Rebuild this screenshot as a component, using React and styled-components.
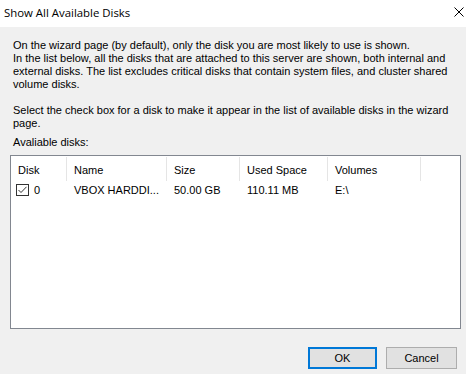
import React from "react";
import styled, { createGlobalStyle } from "styled-components";

const GlobalStyle = createGlobalStyle`
  html, body {
    margin: 0;
    padding: 0;
    background: #f0f0f0;
  }
`;

const Window = styled.div`
  width: 466px;
  height: 374px;
  display: flex;
  flex-direction: column;
  background: #f0f0f0;
  font-family: "Liberation Sans", Arial, sans-serif;
  font-size: 11px;
  color: #000;
  overflow: hidden;
`;

const TitleBar = styled.div`
  height: 27px;
  flex: none;
  background: #fff;
  display: flex;
  align-items: center;
  justify-content: space-between;
  padding-left: 4px;
  box-sizing: border-box;
`;

const Title = styled.span`
  font-family: "Open Sans", "Noto Sans", sans-serif;
  font-size: 11.4px;
  margin-top: -3px;
`;

const Close = styled.div`
  width: 14px;
  height: 27px;
  display: flex;
  align-items: center;
  justify-content: center;
  margin-top: -3px;
`;

const Body = styled.div`
  flex: 1;
  display: flex;
  flex-direction: column;
  padding: 12px 5px 5px 10px;
`;

const Para = styled.p`
  margin: 0 0 ${(p) => p.$gap || 0}px 3px;
  line-height: 13px;
`;

const ListBox = styled.div`
  width: 451px;
  height: 174px;
  box-sizing: border-box;
  border: 1px solid #828790;
  background: #fff;
  margin-top: 6px;
`;

const Row = styled.div`
  display: grid;
  grid-template-columns: 56px 100px 73px 88px 93px 1fr;
  height: ${(p) => (p.$header ? 24 : 17)}px;
  margin-top: ${(p) => (p.$header ? 1 : 0)}px;
  align-items: center;
`;

const Cell = styled.div`
  height: 100%;
  display: flex;
  align-items: center;
  gap: 5px;
  padding-left: 7px;
  box-sizing: border-box;
  white-space: nowrap;
  border-right: ${(p) => (p.$header && !p.$last ? "1px solid #e5e5e5" : "none")};
  padding-top: ${(p) => (p.$header ? 1 : 0)}px;
`;

const Check = styled.span`
  width: 13px;
  height: 12px;
  box-sizing: border-box;
  border: 1px solid #333;
  display: inline-flex;
  align-items: center;
  justify-content: center;
  margin-left: -2px;
`;

const Footer = styled.div`
  display: flex;
  justify-content: flex-end;
  gap: 9px;
  margin-top: 18px;
  padding-right: 4px;
`;

const Button = styled.button`
  width: ${(p) => (p.$primary ? 69 : 71)}px;
  height: 22px;
  box-sizing: border-box;
  background: #e1e1e1;
  border: ${(p) => (p.$primary ? "2px solid #0078d7" : "1px solid #adadad")};
  font-family: "Liberation Sans", Arial, sans-serif;
  font-size: 11px;
  color: #000;
  padding: 0;
`;

const columns = ["Disk", "Name", "Size", "Used Space", "Volumes", ""];

export default function App() {
  return (
    <Window>
      <GlobalStyle />
      <TitleBar>
        <Title>Show All Available Disks</Title>
        <Close>
          <svg width="10" height="10" viewBox="0 0 10 10">
            <path d="M0.5 0.5 L9.5 9.5 M9.5 0.5 L0.5 9.5" stroke="#000" strokeWidth="1" />
          </svg>
        </Close>
      </TitleBar>
      <Body>
        <Para $gap={13}>
          On the wizard page (by default), only the disk you are most likely to use is shown.
          <br />
          In the list below, all the disks that are attached to this server are shown, both internal and
          external disks. The list excludes critical disks that contain system files, and cluster shared
          volume disks.
        </Para>
        <Para $gap={6}>
          Select the check box for a disk to make it appear in the list of available disks in the wizard
          page.
        </Para>
        <Para>Avaliable disks:</Para>
        <ListBox>
          <Row $header>
            {columns.map((c, i) => (
              <Cell key={i} $header $last={i === columns.length - 1}>
                {c}
              </Cell>
            ))}
          </Row>
          <Row>
            <Cell>
              <Check>
                <svg width="9" height="8" viewBox="0 0 9 8">
                  <path d="M0.5 4 L3 6.5 L8.5 0.8" fill="none" stroke="#333" strokeWidth="1" />
                </svg>
              </Check>
              0
            </Cell>
            <Cell>VBOX HARDDI...</Cell>
            <Cell>50.00 GB</Cell>
            <Cell>110.11 MB</Cell>
            <Cell>E:\</Cell>
            <Cell />
          </Row>
        </ListBox>
        <Footer>
          <Button $primary>OK</Button>
          <Button>Cancel</Button>
        </Footer>
      </Body>
    </Window>
  );
}
